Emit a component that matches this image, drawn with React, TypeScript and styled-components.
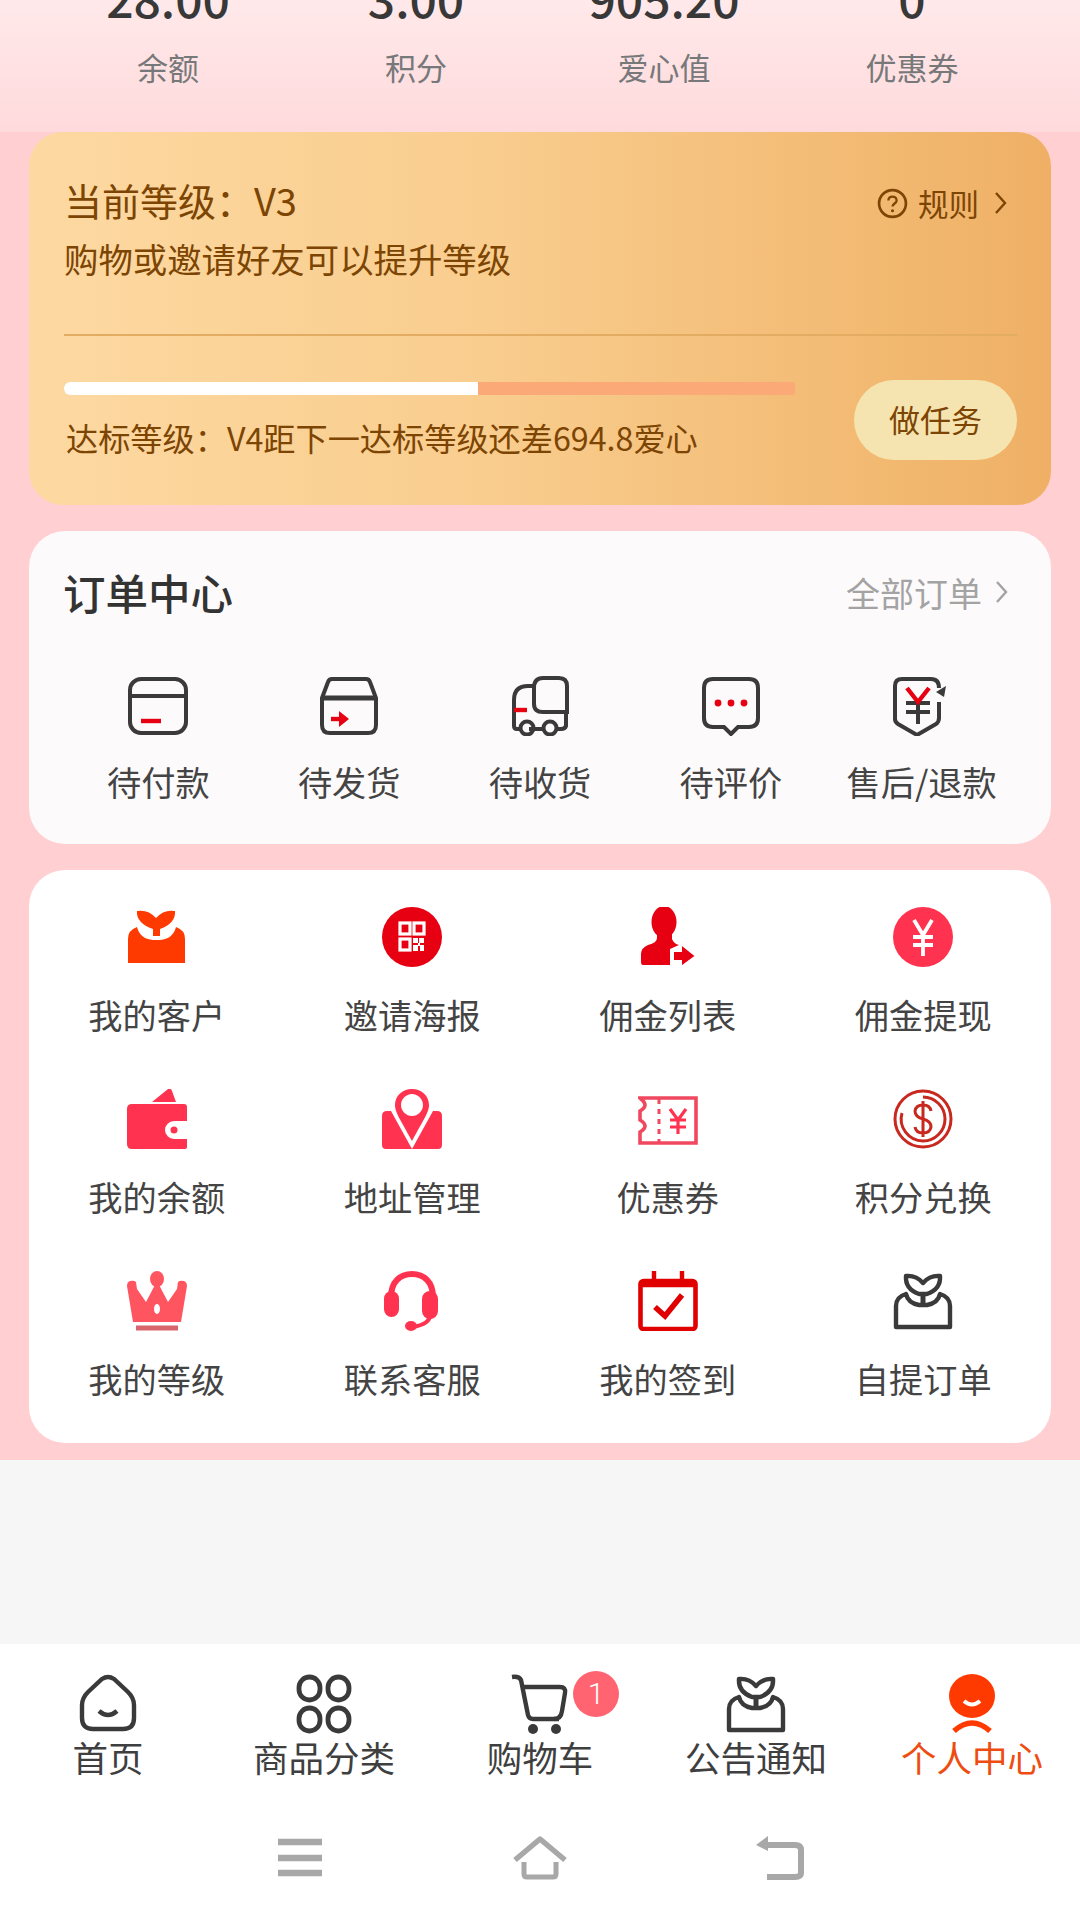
import * as React from "react";
import styled, { createGlobalStyle } from "styled-components";

const DARK = "#3a3a3a";
const RED = "#e60012";
const ROSE = "#ff3350";

const GlobalStyle = createGlobalStyle`
  html, body {
    margin: 0;
    padding: 0;
    background: #f6f6f6;
  }
  body {
    font-family: "Noto Sans CJK SC", "Noto Sans", sans-serif;
  }
  * {
    box-sizing: border-box;
  }
`;

const Page = styled.div`
  width: 1080px;
  height: 1920px;
  display: flex;
  flex-direction: column;
  overflow: hidden;
`;

const Header = styled.header`
  height: 132px;
  flex: none;
  overflow: hidden;
  display: flex;
  flex-direction: column;
  justify-content: flex-end;
  padding: 0 44px 45px;
  background: linear-gradient(180deg, #ffe9ea 0%, #ffdadc 100%);
`;

const StatGrid = styled.div`
  display: grid;
  grid-template-columns: repeat(4, 1fr);
  text-align: center;
`;

const StatValue = styled.div`
  font-size: 48px;
  line-height: 56px;
  font-weight: 500;
  color: #383838;
  margin-bottom: 22px;
`;

const StatLabel = styled.div`
  font-size: 31px;
  line-height: 40px;
  color: #77787a;
`;

const Main = styled.main`
  flex: none;
  background: #ffcfd1;
  padding: 0 29px 17px;
  display: flex;
  flex-direction: column;
  gap: 26px;
`;

const LevelCard = styled.section`
  height: 373px;
  border-radius: 34px;
  padding: 45px 34px 0 35px;
  color: #7d4504;
  background: linear-gradient(90deg, #fdd9a2 0%, #f9cd8e 45%, #efb065 100%);
`;

const LevelTop = styled.div`
  display: flex;
  justify-content: space-between;
  align-items: center;
  height: 46px;
`;

const LevelTitle = styled.div`
  font-size: 38px;
  line-height: 46px;
`;

const RuleLink = styled.div`
  display: flex;
  align-items: center;
  gap: 10px;
  font-size: 30.5px;
  padding-right: 9px;
  margin-top: 6px;
`;

const LevelHint = styled.div`
  font-size: 34.4px;
  line-height: 46px;
  margin-top: 12px;
`;

const Divider = styled.div`
  height: 2px;
  margin-top: 53px;
  background: #e2ac63;
`;

const LevelBottom = styled.div`
  display: flex;
  justify-content: space-between;
  margin-top: 44px;
`;

const ProgressBlock = styled.div`
  width: 731px;
  padding-top: 2px;
`;

const ProgressTrack = styled.div`
  height: 13px;
  border-radius: 6px 3px 3px 6px;
  overflow: hidden;
  background: #fba977;
`;

const ProgressFill = styled.div`
  height: 100%;
  background: #ffffff;
`;

const ProgressText = styled.div`
  font-size: 32.2px;
  line-height: 46px;
  margin: 19px 0 0 2px;
  white-space: nowrap;
`;

const TaskButton = styled.div`
  width: 163px;
  height: 80px;
  border-radius: 40px;
  background: #f6e4b0;
  font-size: 31px;
  display: flex;
  align-items: center;
  justify-content: center;
  padding-bottom: 4px;
`;

const OrderCard = styled.section`
  height: 313px;
  border-radius: 36px;
  background: #fdfafb;
  padding: 36px 34px 0;
`;

const OrderHead = styled.div`
  display: flex;
  justify-content: space-between;
  align-items: center;
  height: 50px;
`;

const OrderTitle = styled.div`
  font-size: 42.5px;
  line-height: 50px;
  font-weight: 500;
  color: #333333;
`;

const AllOrders = styled.div`
  display: flex;
  align-items: center;
  gap: 8px;
  font-size: 34px;
  color: #a3a3a3;
  padding-right: 8px;
`;

const OrderGrid = styled.div`
  display: grid;
  grid-template-columns: repeat(5, 1fr);
  margin-top: 59px;
`;

const ToolCard = styled.section`
  height: 573px;
  border-radius: 36px;
  background: #ffffff;
  padding-top: 37px;
  display: grid;
  grid-template-columns: repeat(4, 1fr);
  grid-auto-rows: 131px;
  row-gap: 51px;
`;

const Cell = styled.div<{ $gap?: number }>`
  display: flex;
  flex-direction: column;
  align-items: center;
  gap: ${(p) => p.$gap ?? 24}px;
`;

const CellLabel = styled.div`
  font-size: 34.2px;
  line-height: 46px;
  color: #444444;
  white-space: nowrap;
`;

const Filler = styled.div`
  flex: 1;
  background: #f6f6f6;
`;

const TabBar = styled.nav`
  flex: none;
  height: 156px;
  background: #ffffff;
  display: grid;
  grid-template-columns: repeat(5, 1fr);
  padding-top: 30px;
`;

const Tab = styled.div`
  position: relative;
  display: flex;
  flex-direction: column;
  align-items: center;
`;

const TabLabel = styled.div<{ $active?: boolean }>`
  font-size: 35.5px;
  line-height: 46px;
  color: ${(p) => (p.$active ? "#ee4d12" : "#3f3f3f")};
  white-space: nowrap;
`;

const Badge = styled.div`
  position: absolute;
  top: -3px;
  left: 141px;
  width: 46px;
  height: 46px;
  border-radius: 50%;
  background: #ff6470;
  color: #ffffff;
  font-family: "Roboto", sans-serif;
  font-weight: 300;
  font-size: 30px;
  line-height: 46px;
  text-align: center;
`;

const SystemBar = styled.div`
  flex: none;
  height: 120px;
  background: #ffffff;
  display: grid;
  grid-template-columns: repeat(3, 240px);
  justify-content: center;
  justify-items: center;
  padding-top: 36px;
`;

const ChevronSvg = styled.svg`
  margin-left: 5px;
`;

const Svg = ({ size = 60, h, children }: { size?: number; h?: number; children: React.ReactNode }) => (
  <svg width={size} height={h ?? size} viewBox={`0 0 ${size} ${h ?? size}`} fill="none">
    {children}
  </svg>
);

const Chevron = ({ color }: { color: string }) => (
  <ChevronSvg width="14" height="26" viewBox="0 0 14 26" fill="none">
    <path d="M2 3l9 10-9 10" stroke={color} strokeWidth="2.4" />
  </ChevronSvg>
);

const HelpIcon = () => (
  <svg width="31" height="31" viewBox="0 0 30 30" fill="none">
    <circle cx="15" cy="15" r="13" stroke="#7d4504" strokeWidth="2.6" />
    <path d="M11 12c0-5 8-5 8 0 0 3-4 3-4 6" stroke="#7d4504" strokeWidth="2.2" />
    <circle cx="15" cy="22" r="1.5" fill="#7d4504" />
  </svg>
);

const PayIcon = () => (
  <Svg>
    <rect x="2" y="3" width="56" height="54" rx="11" stroke={DARK} strokeWidth="4" />
    <path d="M2 20h56" stroke={DARK} strokeWidth="4" />
    <path d="M13 45h20" stroke={RED} strokeWidth="4.4" />
  </Svg>
);

const ShipIcon = () => (
  <Svg>
    <path d="M3 22l6-16q1-3 4-3h34q3 0 4 3l6 16v27q0 8-8 8H11q-8 0-8-8z" stroke={DARK} strokeWidth="4" />
    <path d="M3 22h54" stroke={DARK} strokeWidth="4.8" />
    <path d="M12 43h12" stroke={RED} strokeWidth="4.4" />
    <path d="M20 35l10 8-10 8z" fill={RED} />
  </Svg>
);

const TruckIcon = () => (
  <Svg>
    <path d="M24 10h-6q-14 0-14 14v26q0 3 3 3h2M19 53h16M45 53h6q4 0 5-3V35" stroke={DARK} strokeWidth="4" />
    <path d="M24 12q0-10 9-10h16q8 0 8 8v26H33q-9 0-9-8z" stroke={DARK} strokeWidth="4" />
    <circle cx="17" cy="52" r="6.5" stroke={DARK} strokeWidth="4" />
    <circle cx="40" cy="52" r="6.5" stroke={DARK} strokeWidth="4" />
    <path d="M4 34h13" stroke={RED} strokeWidth="4.4" />
  </Svg>
);

const ChatIcon = () => (
  <Svg>
    <path d="M12 3h36q9 0 9 9v30q0 9-9 9H37l-7 7-7-7H12q-9 0-9-9V12q0-9 9-9z" stroke={DARK} strokeWidth="4" />
    <g fill={RED}>
      <circle cx="17" cy="27" r="3.4" />
      <circle cx="30" cy="27" r="3.4" />
      <circle cx="43" cy="27" r="3.4" />
    </g>
  </Svg>
);

const RefundIcon = () => (
  <Svg>
    <path d="M47 12q0-9-8-9H10q-7 0-7 7v33q0 3 3 5l19 11 19-11q3-2 3-6V26" stroke={DARK} strokeWidth="4" />
    <path d="M44 16l10-6-2 11z" fill={DARK} />
    <path d="M26 25V48M14 27h24M14 36h24" stroke={DARK} strokeWidth="4" />
    <path d="M15 12l11 14 11-14" stroke={RED} strokeWidth="4.4" />
  </Svg>
);

const SolidSproutIcon = () => (
  <Svg>
    <path d="M10 4q11-2 19 7 8-9 19-7 1 12-15 18v7h-7v-7Q9 16 10 4z" fill="#ff3a00" />
    <path d="M10 20q3 12 16 13h7q13-1 16-13 9 3 9 12v24H1V32q0-9 9-12z" fill="#ff3a00" />
  </Svg>
);

const SproutBoxIcon = () => (
  <Svg>
    <path d="M13 5q10-1 17 7 7-8 17-7 1 13-13 18h-8Q12 18 13 5z" stroke={DARK} strokeWidth="4.4" strokeLinejoin="round" />
    <path d="M30 22v12" stroke={DARK} strokeWidth="5" />
    <path d="M13 23q-10 3-10 12v21h54V35q0-9-10-12-2 9-13 11h-8q-11-2-13-11z" stroke={DARK} strokeWidth="4.4" strokeLinejoin="round" />
  </Svg>
);

const QrIcon = () => (
  <Svg>
    <circle cx="30" cy="30" r="30" fill={RED} />
    <g stroke="#ffffff" strokeWidth="3.2">
      <rect x="18" y="16" width="10" height="11" />
      <rect x="32" y="16" width="10" height="11" />
      <rect x="18" y="32" width="10" height="11" />
    </g>
    <path d="M31 31h5v5h-5zM37 31h5v5h-5zM31 38h5v6h-5zM36 36h2v3h-2zM38 38h4v6h-4z" fill="#ffffff" />
  </Svg>
);

const PersonIcon = () => (
  <Svg>
    <g transform="translate(2 0)">
      <ellipse cx="24" cy="15" rx="12.5" ry="16" fill={RED} />
      <path d="M17 26h15v6q2 5 7 6l-9 4v16H3q-2 0-2-3V47q0-6 7-9 9-2 9-7z" fill={RED} />
      <path d="M33 44h8v-7l15 12-15 11v-6h-8z" fill={RED} stroke="#ffffff" strokeWidth="2" />
    </g>
  </Svg>
);

const YenCircleIcon = () => (
  <Svg>
    <circle cx="30" cy="30" r="30" fill={ROSE} />
    <path d="M21 13l9 15 9-15M30 28v21M20 30h20M20 38h20" stroke="#ffffff" strokeWidth="3.8" />
  </Svg>
);

const WalletIcon = () => (
  <Svg>
    <path d="M25 13L41 0q3-1 4 2l4 11z" fill={ROSE} />
    <path d="M5 15h52q3 0 3 3v14H47a9 9 0 0 0 0 18h13v8q0 2-3 2H5q-5 0-5-5V20q0-5 5-5z" fill={ROSE} />
    <circle cx="47" cy="41" r="3.5" fill={ROSE} />
  </Svg>
);

const PinIcon = () => (
  <Svg>
    <path d="M30 0c-10 0-17 7-17 16 0 7 5 14 17 36 12-22 17-29 17-36 0-9-7-16-17-16zm0 5c6 0 11 5 11 11s-5 11-11 11-11-5-11-11 5-11 11-11z" fill={ROSE} fillRule="evenodd" />
    <path d="M5 22h4l21 38H4q-4 0-4-4V27q0-5 5-5zM55 22h-4L30 60h26q4 0 4-4V27q0-5-5-5z" fill={ROSE} />
  </Svg>
);

const TicketIcon = () => (
  <Svg>
    <path d="M2 9h56v45H2V43q5-3 5-6t-5-6V22q5-3 5-6t-5-7z" stroke="#f0495f" strokeWidth="3.6" />
    <path d="M21 10v44" stroke="#f0495f" strokeWidth="3" strokeDasharray="5 5" />
    <path d="M32 20l8 11 8-11M40 31v14M32 31h16M32 38h16" stroke={ROSE} strokeWidth="3.2" />
  </Svg>
);

const CoinIcon = () => (
  <Svg>
    <circle cx="30" cy="30" r="28" stroke="#c8281e" strokeWidth="3" />
    <path d="M30 8a22 22 0 0 1 0 44a22 22 0 0 1-21-28" stroke="#c8281e" strokeWidth="3" />
    <path d="M38 22q-1-6-8-6t-8 6q0 6 8 8t8 8q-1 6-8 6t-8-6M30 12v36" stroke="#c8281e" strokeWidth="3" />
  </Svg>
);

const CrownIcon = () => (
  <Svg>
    <ellipse cx="30" cy="8" rx="7" ry="8" fill="#ff5560" />
    <path d="M30 10l11 21 9-13 1-7q2-2 6-1 3 1 3 5l-6 36H6L0 15q0-4 3-5 4-1 6 1l1 7 9 13z" fill="#ff5560" />
    <ellipse cx="30" cy="38" rx="3" ry="5" fill="#ffffff" />
    <path d="M9 57h42" stroke="#d8656c" strokeWidth="5" />
  </Svg>
);

const HeadsetIcon = () => (
  <Svg>
    <path d="M9 26C9 11 18 3 30 3s21 8 21 23" stroke={ROSE} strokeWidth="6" />
    <rect x="2" y="20" width="15" height="26" rx="7.5" fill={ROSE} />
    <rect x="40" y="20" width="16" height="28" rx="8" fill={ROSE} />
    <path d="M48 44q0 9-17 12" stroke={ROSE} strokeWidth="4" />
    <ellipse cx="29" cy="55" rx="6" ry="5" fill={ROSE} />
  </Svg>
);

const CalendarIcon = () => (
  <Svg>
    <rect x="2.5" y="10" width="55" height="48" rx="3" stroke="#e00000" strokeWidth="4.6" />
    <path d="M2 13h56" stroke="#e00000" strokeWidth="6.5" />
    <path d="M16 0v15M44 0v15" stroke="#e00000" strokeWidth="4.4" />
    <path d="M17 36l10 9 17-21" stroke="#e00000" strokeWidth="5.6" />
  </Svg>
);

const HomeIcon = () => (
  <Svg>
    <path d="M24 5q6-4 12 0l14 13q6 6 6 13v13q0 11-11 11H15q-11 0-11-11V31q0-7 6-13z" stroke={DARK} strokeWidth="4.4" />
    <path d="M21 37q9 8 18 0" stroke={DARK} strokeWidth="4.4" />
  </Svg>
);

const CategoryIcon = () => (
  <Svg>
    <g stroke={DARK} strokeWidth="4.8">
      <rect x="5" y="3" width="21" height="23" rx="10.5" />
      <rect x="34" y="3" width="21" height="23" rx="10.5" />
      <rect x="5" y="34" width="21" height="23" rx="10.5" />
      <rect x="34" y="34" width="21" height="23" rx="10.5" />
    </g>
  </Svg>
);

const CartIcon = () => (
  <Svg>
    <path d="M2 3q7-1 9 3l7 35q1 4 5 4h26" stroke={DARK} strokeWidth="4.4" />
    <path d="M12 13h38q6 0 5 6l-3 18q-1 8-8 8" stroke={DARK} strokeWidth="4.4" />
    <circle cx="23" cy="55" r="5" fill={DARK} />
    <circle cx="46" cy="55" r="5" fill={DARK} />
  </Svg>
);

const MineIcon = () => (
  <Svg>
    <ellipse cx="30" cy="22" rx="23" ry="22" fill="#ff3a00" />
    <path d="M22 27q8 7 16 0" stroke="#ffffff" strokeWidth="4" />
    <path d="M12 57q18-16 36 0" stroke="#ff3a00" strokeWidth="5.5" />
  </Svg>
);

const MenuKey = () => (
  <Svg size={46} h={44}>
    <path d="M1 6h44M1 22h44M1 37h44" stroke="#a8a8a8" strokeWidth="6.5" />
  </Svg>
);

const HomeKey = () => (
  <Svg size={60} h={44}>
    <path d="M5 24L30 3l25 21" stroke="#a8a8a8" strokeWidth="5.5" strokeLinejoin="round" />
    <path d="M14 26v12q0 3 3 3h26q3 0 3-3V26" stroke="#a8a8a8" strokeWidth="5" />
  </Svg>
);

const BackKey = () => (
  <Svg size={50} h={44}>
    <path d="M1 9L13 0v15z" fill="#a8a8a8" />
    <path d="M10 9h30q6 0 6 5v23q0 4-6 4H12" stroke="#a8a8a8" strokeWidth="6" />
  </Svg>
);

const stats = [
  { value: "28.00", label: "余额" },
  { value: "3.00", label: "积分" },
  { value: "905.20", label: "爱心值" },
  { value: "0", label: "优惠券" },
];

const orders = [
  { label: "待付款", icon: <PayIcon /> },
  { label: "待发货", icon: <ShipIcon /> },
  { label: "待收货", icon: <TruckIcon /> },
  { label: "待评价", icon: <ChatIcon /> },
  { label: "售后/退款", icon: <RefundIcon /> },
];

const tools = [
  { label: "我的客户", icon: <SolidSproutIcon /> },
  { label: "邀请海报", icon: <QrIcon /> },
  { label: "佣金列表", icon: <PersonIcon /> },
  { label: "佣金提现", icon: <YenCircleIcon /> },
  { label: "我的余额", icon: <WalletIcon /> },
  { label: "地址管理", icon: <PinIcon /> },
  { label: "优惠券", icon: <TicketIcon /> },
  { label: "积分兑换", icon: <CoinIcon /> },
  { label: "我的等级", icon: <CrownIcon /> },
  { label: "联系客服", icon: <HeadsetIcon /> },
  { label: "我的签到", icon: <CalendarIcon /> },
  { label: "自提订单", icon: <SproutBoxIcon /> },
];

const tabs = [
  { label: "首页", icon: <HomeIcon /> },
  { label: "商品分类", icon: <CategoryIcon /> },
  { label: "购物车", icon: <CartIcon />, badge: 1 },
  { label: "公告通知", icon: <SproutBoxIcon /> },
  { label: "个人中心", icon: <MineIcon />, active: true },
];

export default function App(): JSX.Element {
  return (
    <Page>
      <GlobalStyle />
      <Header>
        <StatGrid>
          {stats.map((s) => (
            <div key={s.label}>
              <StatValue>{s.value}</StatValue>
              <StatLabel>{s.label}</StatLabel>
            </div>
          ))}
        </StatGrid>
      </Header>
      <Main>
        <LevelCard>
          <LevelTop>
            <LevelTitle>当前等级：V3</LevelTitle>
            <RuleLink>
              <HelpIcon />
              规则
              <Chevron color="#7d4504" />
            </RuleLink>
          </LevelTop>
          <LevelHint>购物或邀请好友可以提升等级</LevelHint>
          <Divider />
          <LevelBottom>
            <ProgressBlock>
              <ProgressTrack>
                <ProgressFill style={{ width: `${(414 / 731) * 100}%` }} />
              </ProgressTrack>
              <ProgressText>达标等级：V4距下一达标等级还差694.8爱心</ProgressText>
            </ProgressBlock>
            <TaskButton>做任务</TaskButton>
          </LevelBottom>
        </LevelCard>
        <OrderCard>
          <OrderHead>
            <OrderTitle>订单中心</OrderTitle>
            <AllOrders>
              全部订单
              <Chevron color="#a3a3a3" />
            </AllOrders>
          </OrderHead>
          <OrderGrid>
            {orders.map((o) => (
              <Cell key={o.label} $gap={22}>
                {o.icon}
                <CellLabel>{o.label}</CellLabel>
              </Cell>
            ))}
          </OrderGrid>
        </OrderCard>
        <ToolCard>
          {tools.map((t) => (
            <Cell key={t.label}>
              {t.icon}
              <CellLabel>{t.label}</CellLabel>
            </Cell>
          ))}
        </ToolCard>
      </Main>
      <Filler />
      <TabBar>
        {tabs.map((t) => (
          <Tab key={t.label}>
            {t.icon}
            <TabLabel $active={t.active}>{t.label}</TabLabel>
            {t.badge ? <Badge>{t.badge}</Badge> : null}
          </Tab>
        ))}
      </TabBar>
      <SystemBar>
        <MenuKey />
        <HomeKey />
        <BackKey />
      </SystemBar>
    </Page>
  );
}
